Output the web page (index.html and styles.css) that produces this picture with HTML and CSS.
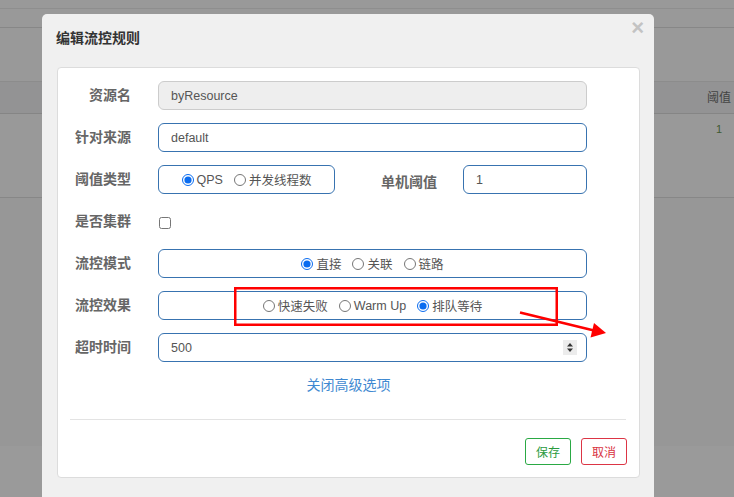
FILE: index.html
```html
<!DOCTYPE html>
<html lang="zh-CN">
<head>
<meta charset="utf-8">
<title>编辑流控规则</title>
<link rel="stylesheet" href="styles.css">
</head>
<body>
<div class="page">
  <div class="nav"></div>
  <div class="subnav"></div>
  <div class="spacer"></div>
  <div class="thead"><span class="th">阈值</span></div>
  <div class="trow"><span class="td">1</span></div>
  <div class="rest"></div>
  <div class="foot"></div>
</div>

<div class="modal">
  <div class="modal-header">
    <h4 class="title">编辑流控规则</h4>
    <span class="close">×</span>
  </div>
  <div class="card">
    <div class="form">
      <div class="row">
        <label class="lbl">资源名</label>
        <input class="field disabled" type="text" value="byResource" disabled>
      </div>
      <div class="row">
        <label class="lbl">针对来源</label>
        <input class="field" type="text" value="default">
      </div>
      <div class="row">
        <label class="lbl">阈值类型</label>
        <div class="split">
          <div class="box radios narrow">
            <label class="opt"><input type="radio" name="grade" checked>QPS</label>
            <label class="opt"><input type="radio" name="grade">并发线程数</label>
          </div>
          <label class="sublbl">单机阈值</label>
          <input class="field small" type="text" value="1">
        </div>
      </div>
      <div class="row">
        <label class="lbl">是否集群</label>
        <div class="checkwrap"><input class="check" type="checkbox"></div>
      </div>
      <div class="row">
        <label class="lbl">流控模式</label>
        <div class="box radios wide">
          <label class="opt"><input type="radio" name="mode" checked>直接</label>
          <label class="opt"><input type="radio" name="mode">关联</label>
          <label class="opt"><input type="radio" name="mode">链路</label>
        </div>
      </div>
      <div class="row">
        <label class="lbl">流控效果</label>
        <div class="box radios wide">
          <label class="opt"><input type="radio" name="effect">快速失败</label>
          <label class="opt"><input type="radio" name="effect">Warm Up</label>
          <label class="opt"><input type="radio" name="effect" checked>排队等待</label>
        </div>
      </div>
      <div class="row">
        <label class="lbl">超时时间</label>
        <div class="box numfield">
          <input class="numinput" type="text" value="500">
          <span class="spin">
            <svg width="14" height="15" viewBox="0 0 14 15"><path d="M4 6.5 L7 3 L10 6.5 Z" fill="#333"/><path d="M4 8.5 L7 12 L10 8.5 Z" fill="#333"/></svg>
          </span>
        </div>
      </div>
    </div>
    <div class="link-row"><a class="link">关闭高级选项</a></div>
    <div class="divider"></div>
    <div class="actions">
      <button class="btn save">保存</button>
      <button class="btn cancel">取消</button>
    </div>
  </div>
</div>

<svg class="annot" width="734" height="497" viewBox="0 0 734 497">
  <rect x="235.25" y="288.25" width="321.5" height="36.5" fill="none" stroke="#ff0000" stroke-width="2.5"/>
  <line x1="520" y1="312.5" x2="594" y2="330.5" stroke="#ff0000" stroke-width="2.5"/>
  <polygon points="594,323 606,333 590.5,337.5" fill="#ff0000"/>
</svg>
</body>
</html>
```

FILE: styles.css
```css
* { box-sizing: border-box; }

html, body {
  margin: 0;
  padding: 0;
}

body {
  width: 734px;
  height: 497px;
  overflow: hidden;
  background: #999999;
  font-family: "Liberation Sans", "Noto Sans CJK SC", sans-serif;
  position: relative;
}

/* ---------- dimmed background page ---------- */
.page {
  width: 734px;
}
.nav {
  height: 9px;
  border-bottom: 1px solid #8e8e8e;
}
.subnav {
  height: 19px;
  border-bottom: 1px solid #878787;
}
.spacer {
  height: 54px;
  border-bottom: 1px solid #8c8c8c;
}
.thead {
  height: 32px;
  background: #939394;
  border-bottom: 1px solid #858585;
  padding-left: 707px;
  line-height: 30px;
}
.th {
  font-size: 12px;
  color: #434343;
}
.trow {
  height: 84px;
  border-bottom: 1px solid #878787;
  padding-left: 716px;
  padding-top: 6px;
  line-height: 16px;
}
.td {
  font-size: 11px;
  color: #3f5a32;
}
.rest {
  height: 248px;
  background: #979797;
}
.foot {
  height: 60px;
  background: #9a9a9a;
}

/* ---------- modal ---------- */
.modal {
  position: absolute;
  left: 42px;
  top: 14px;
  width: 612px;
  height: 500px;
  background: #f0f0f0;
  border-radius: 5px;
}
.modal-header {
  display: flex;
  justify-content: space-between;
  align-items: flex-start;
  padding: 14px 10px 19px 14px;
}
.title {
  margin: 0;
  font-size: 14px;
  line-height: 20px;
  font-weight: bold;
  color: #333;
}
.close {
  font-size: 22px;
  line-height: 20px;
  font-weight: bold;
  color: #c3c3c3;
  margin-top: -10px;
}

.card {
  margin: 0 14px 0 15px;
  background: #fff;
  border: 1px solid #dcdcdc;
  border-radius: 4px;
  padding: 13px 0 12px 0;
}

.form {
  display: flex;
  flex-direction: column;
  gap: 13px;
}
.row {
  display: flex;
  align-items: center;
  height: 29px;
}
.lbl {
  width: 73px;
  margin-right: 27px;
  text-align: right;
  font-size: 14px;
  font-weight: bold;
  color: #666;
  line-height: 29px;
}

.field, .box {
  height: 29px;
  border: 1px solid #3873b0;
  border-radius: 6px;
  background: #fff;
  font-family: "Liberation Sans", "Noto Sans CJK SC", sans-serif;
  font-size: 12.5px;
  color: #555;
}
.field {
  width: 429px;
  padding: 0 12px;
  outline: none;
}
.field.disabled {
  background: #eeeeee;
  border-color: #cccccc;
  color: #555;
}

.split {
  display: flex;
  align-items: center;
  width: 429px;
}
.box.narrow {
  width: 177px;
}
.sublbl {
  flex: 1;
  text-align: right;
  padding-right: 26px;
  padding-top: 2px;
  font-size: 14px;
  font-weight: bold;
  color: #666;
}
.field.small {
  width: 124px;
}

.radios {
  display: flex;
  align-items: center;
  justify-content: center;
  gap: 11px;
}
.box.wide {
  width: 429px;
}
.opt {
  display: flex;
  align-items: center;
  font-size: 12.5px;
  color: #555;
}
.opt input {
  width: 12px;
  height: 12px;
  margin: 0 3px 0 0;
  accent-color: #0a6cf0;
}

.checkwrap {
  display: flex;
  align-items: center;
  height: 29px;
}
.check {
  width: 12px;
  height: 12px;
  margin: 2px 0 0 1px;
}

.numfield {
  width: 429px;
  display: flex;
  align-items: center;
  padding: 0 9px 0 12px;
}
.numinput {
  flex: 1;
  border: none;
  outline: none;
  padding: 0;
  font-family: "Liberation Sans", "Noto Sans CJK SC", sans-serif;
  font-size: 12.5px;
  color: #555;
  background: transparent;
}
.spin {
  width: 14px;
  height: 15px;
  background: #ececec;
  display: flex;
}

.link-row {
  margin-top: 13px;
  text-align: center;
  line-height: 20px;
}
.link {
  font-size: 14px;
  color: #3f89d1;
  cursor: pointer;
}

.divider {
  margin: 24px 13px 0 12px;
  height: 1px;
  background: #e3e3e3;
}

.actions {
  display: flex;
  justify-content: flex-end;
  gap: 10px;
  margin-top: 18px;
  padding-right: 12px;
}
.btn {
  height: 27px;
  padding: 0 10px;
  background: #fff;
  border-radius: 3px;
  font-family: "Liberation Sans", "Noto Sans CJK SC", sans-serif;
  font-size: 12px;
  cursor: pointer;
}
.btn.save {
  border: 1px solid #2aa944;
  color: #2a9a3e;
}
.btn.cancel {
  border: 1px solid #dc3545;
  color: #d8323f;
}

/* ---------- annotation overlay ---------- */
.annot {
  position: absolute;
  left: 0;
  top: 0;
  pointer-events: none;
}
```
